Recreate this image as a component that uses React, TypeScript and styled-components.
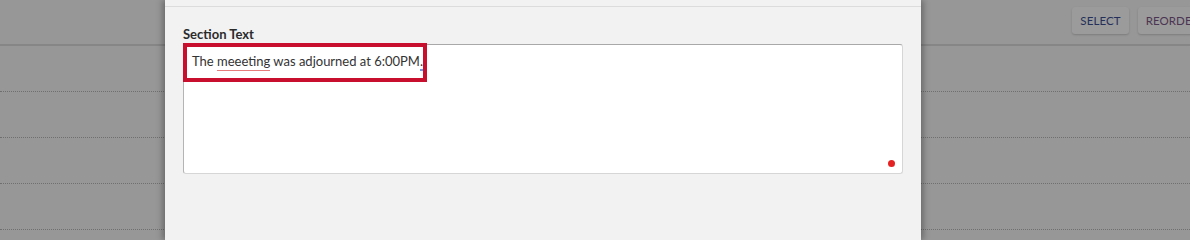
import React from "react";
import styled, { createGlobalStyle } from "styled-components";

const GlobalStyle = createGlobalStyle`
  html, body {
    margin: 0;
    padding: 0;
    width: 100%;
    min-height: 100%;
    overflow: hidden;
    background: #979797;
    font-family: Lato, "Liberation Sans", sans-serif;
  }
`;

const Page = styled.div`
  position: relative;
  width: 1190px;
  height: 100vh;
  min-height: 205px;
  background: #979797;
  overflow: hidden;
`;

const Toolbar = styled.div`
  height: 46px;
  border-bottom: 2px solid #868686;
  display: flex;
  justify-content: flex-end;
  align-items: flex-start;
  gap: 9px;
  padding: 7px 0 0 0;
  box-sizing: border-box;
  margin-right: -17px;
`;

const ToolButton = styled.button<{ $tone: string }>`
  height: 27px;
  padding: 0 8px;
  border: none;
  border-radius: 3px;
  background: #9b9b9b;
  box-shadow: 0 1px 2px rgba(0, 0, 0, 0.18);
  font-family: Lato, "Liberation Sans", sans-serif;
  font-size: 11.5px;
  color: ${(p) => p.$tone};
  letter-spacing: 0.1px;
  white-space: nowrap;
`;

const Row = styled.div`
  height: 46px;
  border-bottom: 1px dotted #6f6f6f;
  box-sizing: border-box;
  &:first-of-type {
    height: 45px;
  }
`;

const Modal = styled.div`
  position: absolute;
  left: 165px;
  top: 0;
  width: 756px;
  height: 100%;
  background: #f2f2f2;
  box-shadow: -3px 0 6px rgba(0, 0, 0, 0.25), 3px 0 6px rgba(0, 0, 0, 0.25);
`;

const ModalHead = styled.div`
  height: 6px;
  border-bottom: 1px solid #dcdcdc;
`;

const ModalBody = styled.div`
  padding: 19px 18px 0 18px;
`;

const Label = styled.div`
  font-size: 13px;
  font-weight: 700;
  color: #2b2b2b;
  line-height: 17px;
  margin-bottom: 1px;
`;

const TextBox = styled.div`
  position: relative;
  height: 130px;
  background: #fff;
  border: 1px solid #d6d6d6;
  border-top-color: #a8a8a8;
  border-left-color: #b4b4b4;
  border-radius: 3px;
  box-sizing: border-box;
  padding: 8px 8px;
  font-size: 13px;
  color: #333;
  line-height: 17px;
`;

const Spell = styled.span`
  border-bottom: 1px solid #e77c7c;
  padding-bottom: 1px;
`;

const Grammar = styled.span`
  border-bottom: 2px solid #6b9be0;
`;

const Highlight = styled.div`
  position: absolute;
  left: -1px;
  top: -2px;
  width: 244px;
  height: 39px;
  border: 4px solid #c8102e;
  box-sizing: border-box;
  pointer-events: none;
`;

const Dot = styled.span`
  position: absolute;
  right: 7px;
  bottom: 6px;
  width: 7px;
  height: 7px;
  border-radius: 50%;
  background: #e52222;
`;

export default function App() {
  return (
    <>
      <GlobalStyle />
      <Page>
        <Toolbar>
          <ToolButton $tone="#25305a">SELECT</ToolButton>
          <ToolButton $tone="#4b3552">REORDER</ToolButton>
        </Toolbar>
        <Row />
        <Row />
        <Row />
        <Row />
        <Modal>
          <ModalHead />
          <ModalBody>
            <Label>Section Text</Label>
            <TextBox>
              The <Spell>meeeting</Spell> was adjourned at 6:00PM<Grammar>..</Grammar>
              <Highlight />
              <Dot />
            </TextBox>
          </ModalBody>
        </Modal>
      </Page>
    </>
  );
}
